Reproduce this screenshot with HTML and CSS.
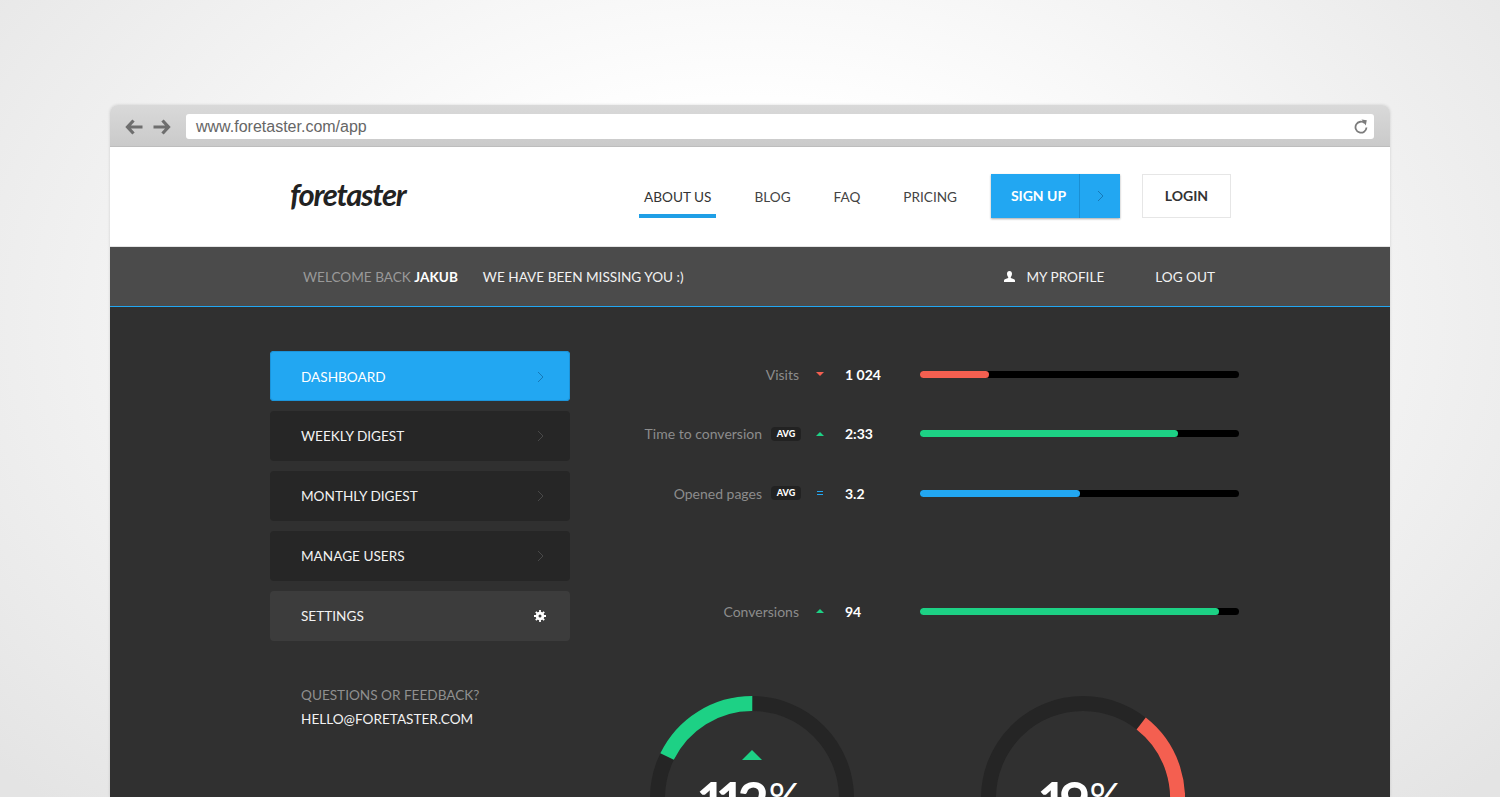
FILE: index.html
```html
<!DOCTYPE html>
<html lang="en">
<head>
  <meta charset="UTF-8" />
  <title>Foretaster</title>
  <link rel="stylesheet" href="styles.css">
</head>
<body>
  <div class="window">

    <div class="toolbar">
      <svg class="arrow" width="18" height="16" viewBox="0 0 18 16"><path d="M8.500 1.500 2.500 8l6 6.500M3 8h14.500" fill="none" stroke="#6e6e6e" stroke-width="3.200"/></svg>
      <svg class="arrow" width="18" height="16" viewBox="0 0 18 16"><path d="M9.500 1.500l6 6.500-6 6.500M15 8H.5" fill="none" stroke="#6e6e6e" stroke-width="3.200"/></svg>
      <div class="url">
        <span>www.foretaster.com/app</span>
        <svg width="14" height="15" viewBox="0 0 14 15"><path d="M10.800 4.200A5.500 5.500 0 1 0 12.500 8.500" fill="none" stroke="#7c7c7c" stroke-width="1.800"/><path d="M7.500 0.500 12.800 1.200 11.800 6.500z" fill="#7c7c7c"/></svg>
      </div>
    </div>

    <header>
      <div class="logo">foretaster</div>
      <nav>
        <a class="active" href="#">ABOUT US</a>
        <a href="#">BLOG</a>
        <a href="#">FAQ</a>
        <a href="#">PRICING</a>
      </nav>
      <a class="signup" href="#">
        <span class="signup-text">SIGN UP</span>
        <span class="signup-arrow"><svg width="7" height="12" viewBox="0 0 7 12"><path d="M1 1l5 5-5 5" fill="none" stroke="#1579b8" stroke-width="1"/></svg></span>
      </a>
      <a class="login" href="#">LOGIN</a>
    </header>

    <div class="subbar">
      <span class="welcome">WELCOME BACK <b>JAKUB</b></span>
      <span class="missing">WE HAVE BEEN MISSING YOU :)</span>
      <a class="profile" href="#">
        <svg width="11" height="11" viewBox="0 0 11 11"><path d="M5.500 0C7.200 0 8 1.200 8 2.800 8 4.300 7.300 5.500 6.800 6v1c1.500.6 4.200 1 4.200 2.500V11H0V9.500C0 8 2.700 7.600 4.200 7V6C3.700 5.500 3 4.300 3 2.800 3 1.200 3.800 0 5.500 0z" fill="#fff"/></svg>
        MY PROFILE
      </a>
      <a class="logout" href="#">LOG OUT</a>
    </div>

    <main>
      <aside>
        <ul class="menu">
          <li class="current">DASHBOARD <svg width="7" height="12" viewBox="0 0 7 12"><path d="M1 1l5 5-5 5" fill="none" stroke="#1579b8"/></svg></li>
          <li>WEEKLY DIGEST <svg width="7" height="12" viewBox="0 0 7 12"><path d="M1 1l5 5-5 5" fill="none" stroke="#484848"/></svg></li>
          <li>MONTHLY DIGEST <svg width="7" height="12" viewBox="0 0 7 12"><path d="M1 1l5 5-5 5" fill="none" stroke="#484848"/></svg></li>
          <li>MANAGE USERS <svg width="7" height="12" viewBox="0 0 7 12"><path d="M1 1l5 5-5 5" fill="none" stroke="#484848"/></svg></li>
          <li class="settings">SETTINGS
            <svg width="12" height="12" viewBox="0 0 12 12"><circle cx="6" cy="6" r="2.900" fill="none" stroke="#fff" stroke-width="2.800"/><path d="M6 0v12M0 6h12M1.800 1.800l8.400 8.400M10.200 1.800l-8.400 8.400" stroke="#fff" stroke-width="1.800"/><circle cx="6" cy="6" r="1.500" fill="#3c3c3c"/></svg>
          </li>
        </ul>
        <div class="feedback">
          <p>QUESTIONS OR FEEDBACK?</p>
          <a href="#">HELLO@FORETASTER.COM</a>
        </div>
      </aside>

      <section class="stats">
        <div class="stat">
          <div class="stat-label plain">Visits</div>
          <div class="trend"><i class="down"></i></div>
          <div class="stat-value">1 024</div>
          <div class="bar"><div class="fill red" style="width:21.500%"></div></div>
        </div>
        <div class="stat">
          <div class="stat-label">Time to conversion <span class="badge">AVG</span></div>
          <div class="trend"><i class="up"></i></div>
          <div class="stat-value">2:33</div>
          <div class="bar"><div class="fill green" style="width:81%"></div></div>
        </div>
        <div class="stat">
          <div class="stat-label">Opened pages <span class="badge">AVG</span></div>
          <div class="trend"><i class="same"></i></div>
          <div class="stat-value">3.2</div>
          <div class="bar"><div class="fill blue" style="width:50%"></div></div>
        </div>
        <div class="stat spaced">
          <div class="stat-label plain">Conversions</div>
          <div class="trend"><i class="up"></i></div>
          <div class="stat-value">94</div>
          <div class="bar"><div class="fill green" style="width:93.700%"></div></div>
        </div>

        <div class="rings">
          <div class="ring">
            <svg width="204" height="204" viewBox="0 0 204 204">
              <circle cx="102" cy="102" r="94.500" fill="none" stroke="#252525" stroke-width="15"/>
              <circle cx="102" cy="102" r="94.500" fill="none" stroke="#1dd185" stroke-width="15" stroke-dasharray="105.600 600" transform="rotate(-154 102 102)"/>
            </svg>
            <i class="ring-up"></i>
            <div class="ring-text">112<small>%</small></div>
          </div>
          <div class="ring">
            <svg width="204" height="204" viewBox="0 0 204 204">
              <circle cx="102" cy="102" r="94.500" fill="none" stroke="#252525" stroke-width="15"/>
              <circle cx="102" cy="102" r="94.500" fill="none" stroke="#f45f50" stroke-width="15" stroke-dasharray="112.800 600" transform="rotate(-52 102 102)"/>
            </svg>
            <div class="ring-text">19<small>%</small></div>
          </div>
        </div>
      </section>
    </main>

  </div>
</body>
</html>
```

FILE: styles.css
```css
* { box-sizing: border-box; }
html, body { height: 100%; }
body {
  margin: 0;
  height: 797px;
  overflow: hidden;
  padding: 105px 110px 0;
  font-family: 'Lato', sans-serif;
  font-size: 13.6px;
  color: #333;
  background: radial-gradient(ellipse 1000px 680px at 50% 40%, #fff 30%, #e4e4e4 100%);
}
a { color: inherit; text-decoration: none; }

.window {
  height: 692px;
  overflow: hidden;
  border-radius: 8px 8px 0 0;
  box-shadow: 0 0 3px rgba(0,0,0,0.15);
}

/* Browser bar */
.toolbar {
  height: 42px;
  display: flex;
  align-items: center;
  padding: 2px 16px 0 15px;
  gap: 10px;
  background: linear-gradient(#d9d9d9, #cacaca);
  border-bottom: 1px solid #bdbdbd;
}
.url {
  flex: 1;
  height: 25px;
  margin-left: 5px;
  padding: 0 6px 0 10px;
  display: flex;
  align-items: center;
  justify-content: space-between;
  background: #fff;
  border-radius: 3px;
  font-family: 'Liberation Sans', sans-serif;
  font-size: 16px;
  color: #666;
}

/* Header */
header {
  height: 100px;
  display: flex;
  align-items: center;
  padding: 0 159px 2px 180px;
  background: #fff;
  border-bottom: 1px solid #e4e4e4;
}
.logo {
  font-size: 31px;
  font-weight: 700;
  font-style: italic;
  letter-spacing: -1.3px;
  color: #222;
  margin-top: -4px;
}
nav {
  display: flex;
  gap: 33px;
  margin-left: auto;
  margin-right: 29px;
  align-self: flex-end;
  margin-bottom: 26px;
}
nav a {
  padding: 0 5px 9px;
  color: #444;
  border-bottom: 4px solid transparent;
}
nav a.active {
  color: #333;
  border-bottom-color: #1f9fe6;
}
.signup {
  width: 129px;
  height: 44px;
  display: flex;
  background: #22a7f2;
  box-shadow: 0 1px 2px rgba(0,0,0,0.35);
  color: #fff;
  font-size: 14px;
  font-weight: 700;
}
.signup-text {
  flex: 1;
  padding-left: 7px;
  line-height: 44px;
  text-align: center;
}
.signup-arrow {
  width: 41px;
  display: flex;
  align-items: center;
  justify-content: center;
  border-left: 1px solid #1a8fd4;
}
.login {
  width: 89px;
  height: 44px;
  margin-left: 22px;
  line-height: 42px;
  text-align: center;
  font-size: 14px;
  font-weight: 700;
  border: 1px solid #e6e6e6;
}

/* Welcome bar */
.subbar {
  height: 60px;
  display: flex;
  align-items: center;
  padding: 0 175px 0 193px;
  background: #4b4b4b;
  border-bottom: 1px solid #22a7f2;
  color: #f2f2f2;
}
.welcome { color: #999; }
.welcome b { color: #fff; }
.missing { margin-left: 25px; }
.profile {
  margin-left: auto;
  display: flex;
  align-items: center;
  gap: 11px;
}
.logout { margin-left: 51px; }

/* Main */
main {
  display: flex;
  height: 490px;
  padding: 44px 0 0 160px;
  background: #303030;
}
aside { width: 300px; }
.menu {
  list-style: none;
  margin: 0;
  padding: 0;
}
.menu li {
  height: 50px;
  margin-bottom: 10px;
  padding: 0 24px 0 31px;
  display: flex;
  align-items: center;
  justify-content: space-between;
  background: #262626;
  border-radius: 4px;
  color: #f2f2f2;
}
.menu li svg { margin-right: 2px; }
.menu li.current {
  padding-top: 1px;
  background: #22a7f2;
  box-shadow: inset 0 0 0 1px #1c94da;
  color: #fff;
}
.menu li.settings { background: #3c3c3c; }
.menu li.settings svg { margin-right: 0; }
.feedback {
  margin: 46px 0 0 31px;
}
.feedback p {
  margin: 0 0 7px;
  line-height: 17px;
  color: #8f8f8f;
}
.feedback a {
  line-height: 17px;
  color: #f2f2f2;
}

/* Stats */
.stats {
  width: 609px;
  margin: -6.5px 0 0 60px;
}
.stat {
  height: 59.5px;
  display: flex;
  align-items: center;
}
.stat.spaced { margin-top: 58.5px; }
.stat-label {
  width: 171px;
  display: flex;
  align-items: center;
  justify-content: flex-end;
  gap: 9px;
  font-size: 14px;
  color: #8c8c8c;
}
.stat-label.plain { padding-right: 2px; }
.badge {
  width: 30px;
  height: 14px;
  line-height: 14px;
  text-align: center;
  border-radius: 4px;
  background: #222;
  color: #fff;
  font-size: 9px;
  font-weight: 900;
}
.trend {
  width: 38px;
  display: flex;
  justify-content: center;
}
.trend i { display: block; }
.up {
  border: 4px solid transparent;
  border-top: 0;
  border-bottom: 4px solid #1dd185;
}
.down {
  border: 4px solid transparent;
  border-bottom: 0;
  border-top: 4px solid #f45f50;
}
.same {
  width: 6px;
  height: 4px;
  border-top: 1px solid #22a7f2;
  border-bottom: 1px solid #22a7f2;
}
.stat-value {
  width: 75px;
  margin-left: 6px;
  color: #fff;
  font-size: 14px;
  font-weight: 700;
}
.bar {
  width: 319px;
  height: 7px;
  background: #000;
  border-radius: 4px;
}
.fill {
  height: 100%;
  border-radius: 4px;
}
.red { background: #f45f50; }
.green { background: #1dd185; }
.blue { background: #22a7f2; }

/* Rings */
.rings {
  display: flex;
  gap: 127px;
  margin: 55px 0 0 20px;
}
.ring {
  position: relative;
  width: 204px;
  height: 204px;
}
.ring svg { display: block; }
.ring-up {
  position: absolute;
  left: 92px;
  top: 54px;
  border: 10px solid transparent;
  border-top: 0;
  border-bottom: 10px solid #1dd185;
}
.ring-text {
  position: absolute;
  left: -4px;
  right: 0;
  top: 66px;
  text-align: center;
  color: #fff;
  font-size: 54px;
  font-weight: 700;
  line-height: 70px;
  letter-spacing: -3px;
  font-variant-numeric: proportional-nums;
}
.ring-text small {
  margin-left: 3px;
  font-size: 40px;
  font-weight: 400;
  letter-spacing: 0;
  vertical-align: 9px;
}
```
